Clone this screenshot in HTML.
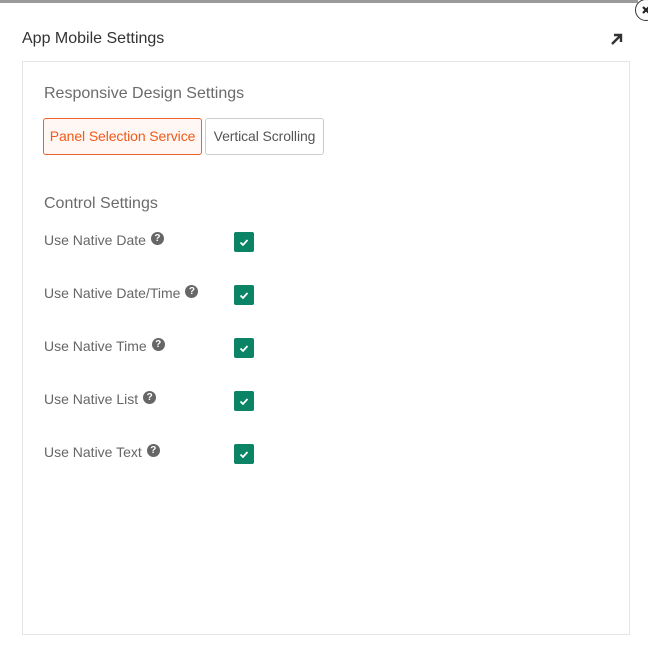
<!DOCTYPE html>
<html><head><style>
body{margin:0;width:648px;height:651px;background:#fff;font-family:"Liberation Sans",sans-serif;position:relative;overflow:hidden}
.top{position:absolute;left:0;top:0;width:638px;height:3px;background:#9a9a9a}
.close{position:absolute;left:635px;top:-1px;width:22px;height:22px;border:1px solid #333;border-radius:50%;background:#fff;box-sizing:border-box}
.title{position:absolute;left:22px;top:30px;font-size:16px;color:#333}
.panel{position:absolute;left:22px;top:61px;width:608px;height:574px;border:1px solid #e6e6e6;box-sizing:border-box}
.h{position:absolute;left:44px;font-size:16px;color:#6b6b6b}
.btn{position:absolute;top:118px;height:37px;border:1px solid #ccc;border-radius:3px;box-sizing:border-box;font-size:14px;line-height:34px;text-align:center;color:#555;letter-spacing:-0.1px}
.lbl{position:absolute;left:44px;font-size:14px;color:#666}
.q{display:inline-block;width:13px;height:13px;border-radius:50%;background:#666;color:#fff;font-size:10px;line-height:13px;text-align:center;font-weight:bold;vertical-align:4px;margin-left:5px}
.cb{position:absolute;left:234px;width:20px;height:20px;background:#0a8465;border-radius:2px}
</style></head><body>
<div class="top"></div>
<div class="close"><svg width="20" height="20" viewBox="0 0 20 20"><path d="M7 7l6 6M13 7l-6 6" stroke="#222" stroke-width="2.2"/></svg></div>
<div class="title">App Mobile Settings</div>
<svg style="position:absolute;left:610px;top:32px" width="14" height="14" viewBox="0 0 14 14"><path d="M2 12L11 3M4 3h7v7" stroke="#333" stroke-width="2.4" fill="none"/></svg>
<div class="panel"></div>
<div class="h" style="top:85px">Responsive Design Settings</div>
<div class="btn" style="left:43px;width:159px;border-color:#f0612a;color:#f05a1a;background:#fff7f3">Panel Selection Service</div>
<div class="btn" style="left:205px;width:119px">Vertical Scrolling</div>
<div class="h" style="top:195px">Control Settings</div>
<div class="lbl" style="top:232px">Use Native Date<span class="q">?</span></div>
<div class="lbl" style="top:285px">Use Native Date/Time<span class="q">?</span></div>
<div class="lbl" style="top:338px">Use Native Time<span class="q">?</span></div>
<div class="lbl" style="top:391px">Use Native List<span class="q">?</span></div>
<div class="lbl" style="top:444px">Use Native Text<span class="q">?</span></div>
<div class="cb" style="top:232px"><svg width="20" height="20"><path d="M6.5 10.5l2.5 2.5 4.5-5" stroke="#fff" stroke-width="1.8" fill="none"/></svg></div>
<div class="cb" style="top:285px"><svg width="20" height="20"><path d="M6.5 10.5l2.5 2.5 4.5-5" stroke="#fff" stroke-width="1.8" fill="none"/></svg></div>
<div class="cb" style="top:338px"><svg width="20" height="20"><path d="M6.5 10.5l2.5 2.5 4.5-5" stroke="#fff" stroke-width="1.8" fill="none"/></svg></div>
<div class="cb" style="top:391px"><svg width="20" height="20"><path d="M6.5 10.5l2.5 2.5 4.5-5" stroke="#fff" stroke-width="1.8" fill="none"/></svg></div>
<div class="cb" style="top:444px"><svg width="20" height="20"><path d="M6.5 10.5l2.5 2.5 4.5-5" stroke="#fff" stroke-width="1.8" fill="none"/></svg></div>
</body></html>
